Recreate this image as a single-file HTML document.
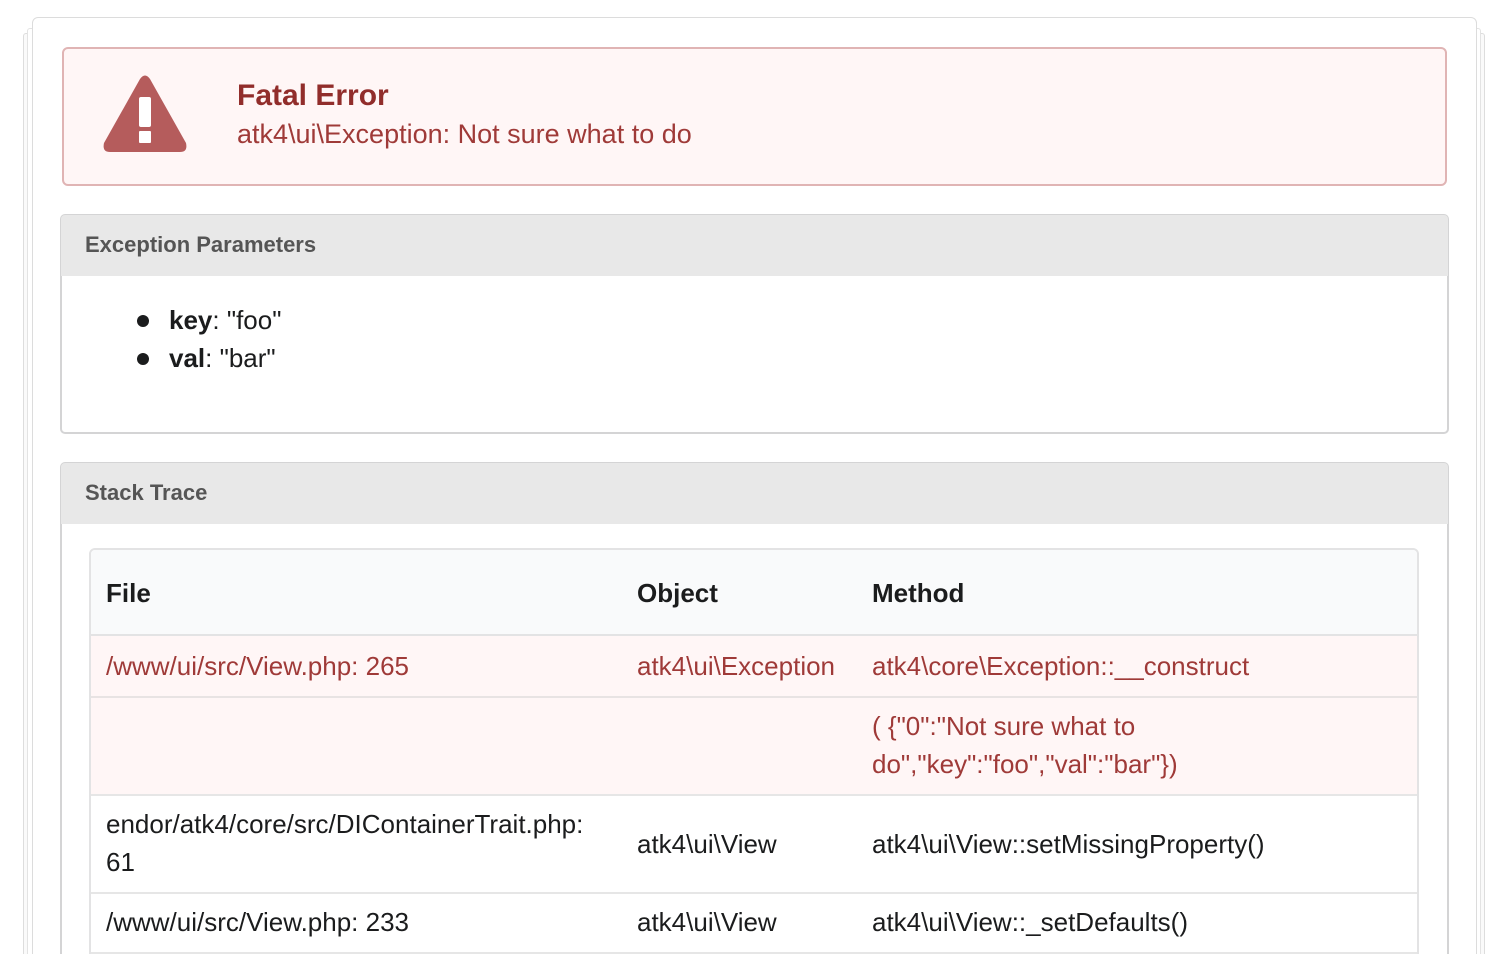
<!DOCTYPE html>
<html><head><meta charset="utf-8"><style>
*{box-sizing:border-box;margin:0;padding:0}
html,body{width:1504px;height:970px;overflow:hidden}
body{background:#fff;position:relative;font-family:"Liberation Sans",sans-serif;color:#1b1c1d}
.a{position:absolute;white-space:nowrap}
.red{color:#9f3a38}
.t{font-size:26px;line-height:30px}
</style></head><body>
<div class="a" style="left:23px;top:33px;width:1462px;height:960px;border:1px solid #ddd;border-radius:3px;background:#fafafa"></div>
<div class="a" style="left:27px;top:28px;width:1454px;height:960px;border:1px solid #e3e3e3;border-radius:3px;background:#fff"></div>
<div class="a" style="left:32px;top:17px;width:1445px;height:960px;border:1px solid #dcdcdc;border-radius:6px;background:#fff"></div>

<div class="a" style="left:62px;top:47px;width:1385px;height:139px;background:#fff6f6;border:2px solid #e0b4b4;border-radius:6px"></div>
<svg class="a" style="left:102px;top:73px" width="86" height="80" viewBox="0 0 86 80">
<path d="M38 6 Q43 -1 48 6 L84 70 Q86 79 78 79 L8 79 Q0 79 2 70 Z" fill="#b55c5c"/>
<rect x="37" y="24" width="12" height="30" rx="2" fill="#fff"/>
<rect x="37" y="58" width="12" height="12" rx="1" fill="#fff"/>
</svg>
<div class="a" style="left:237px;top:78px;font-size:30px;font-weight:bold;color:#912d2b;line-height:36px">Fatal Error</div>
<div class="a red" style="left:237px;top:118px;font-size:27px;line-height:32px">atk4\ui\Exception: Not sure what to do</div>

<div class="a" style="left:60px;top:214px;width:1389px;height:220px;border:2px solid #d4d4d5;border-radius:5px;background:#fff"></div>
<div class="a" style="left:61px;top:215px;width:1387px;height:61px;background:#e8e8e8;border-radius:4px 4px 0 0"></div>
<div class="a" style="left:85px;top:232px;font-size:22px;font-weight:bold;color:#555;line-height:26px">Exception Parameters</div>
<div class="a" style="left:137px;top:315px;width:12px;height:12px;border-radius:50%;background:#1b1c1d"></div>
<div class="a" style="left:137px;top:353px;width:12px;height:12px;border-radius:50%;background:#1b1c1d"></div>
<div class="a t" style="left:169px;top:305px"><b>key</b>: "foo"</div>
<div class="a t" style="left:169px;top:343px"><b>val</b>: "bar"</div>

<div class="a" style="left:60px;top:462px;width:1389px;height:520px;border:2px solid #d4d4d5;border-radius:5px;background:#fff"></div>
<div class="a" style="left:61px;top:463px;width:1387px;height:61px;background:#e8e8e8;border-radius:4px 4px 0 0"></div>
<div class="a" style="left:85px;top:480px;font-size:22px;font-weight:bold;color:#555;line-height:26px">Stack Trace</div>

<div class="a" style="left:89px;top:548px;width:1330px;height:430px;border:2px solid #e3e3e4;border-radius:6px;background:#fff;overflow:hidden">
 <div class="a" style="left:0;top:0;width:1330px;height:86px;background:#f9fafb;border-bottom:2px solid #e3e3e4"></div>
 <div class="a" style="left:0;top:86px;width:1330px;height:159px;background:#fff6f6"></div>
 <div class="a" style="left:0;top:146px;width:1330px;height:2px;background:#e8e3e3"></div>
 <div class="a" style="left:0;top:244px;width:1330px;height:2px;background:#e6e6e6"></div>
 <div class="a" style="left:0;top:342px;width:1330px;height:2px;background:#e6e6e6"></div>
 <div class="a" style="left:0;top:402px;width:1330px;height:2px;background:#e6e6e6"></div>
</div>
<div class="a t" style="left:106px;top:578px;font-weight:bold">File</div>
<div class="a t" style="left:637px;top:578px;font-weight:bold">Object</div>
<div class="a t" style="left:872px;top:578px;font-weight:bold">Method</div>

<div class="a red t" style="left:106px;top:651px">/www/ui/src/View.php: 265</div>
<div class="a red t" style="left:637px;top:651px">atk4\ui\Exception</div>
<div class="a red t" style="left:872px;top:651px">atk4\core\Exception::__construct</div>
<div class="a red t" style="left:872px;top:707px;line-height:38px">( {"0":"Not sure what to<br>do","key":"foo","val":"bar"})</div>

<div class="a t" style="left:106px;top:805px;line-height:38px">endor/atk4/core/src/DIContainerTrait.php:<br>61</div>
<div class="a t" style="left:637px;top:829px">atk4\ui\View</div>
<div class="a t" style="left:872px;top:829px">atk4\ui\View::setMissingProperty()</div>

<div class="a t" style="left:106px;top:907px">/www/ui/src/View.php: 233</div>
<div class="a t" style="left:637px;top:907px">atk4\ui\View</div>
<div class="a t" style="left:872px;top:907px">atk4\ui\View::_setDefaults()</div>

<div class="a" style="left:0;top:954px;width:1504px;height:16px;background:#fff"></div>
</body></html>
